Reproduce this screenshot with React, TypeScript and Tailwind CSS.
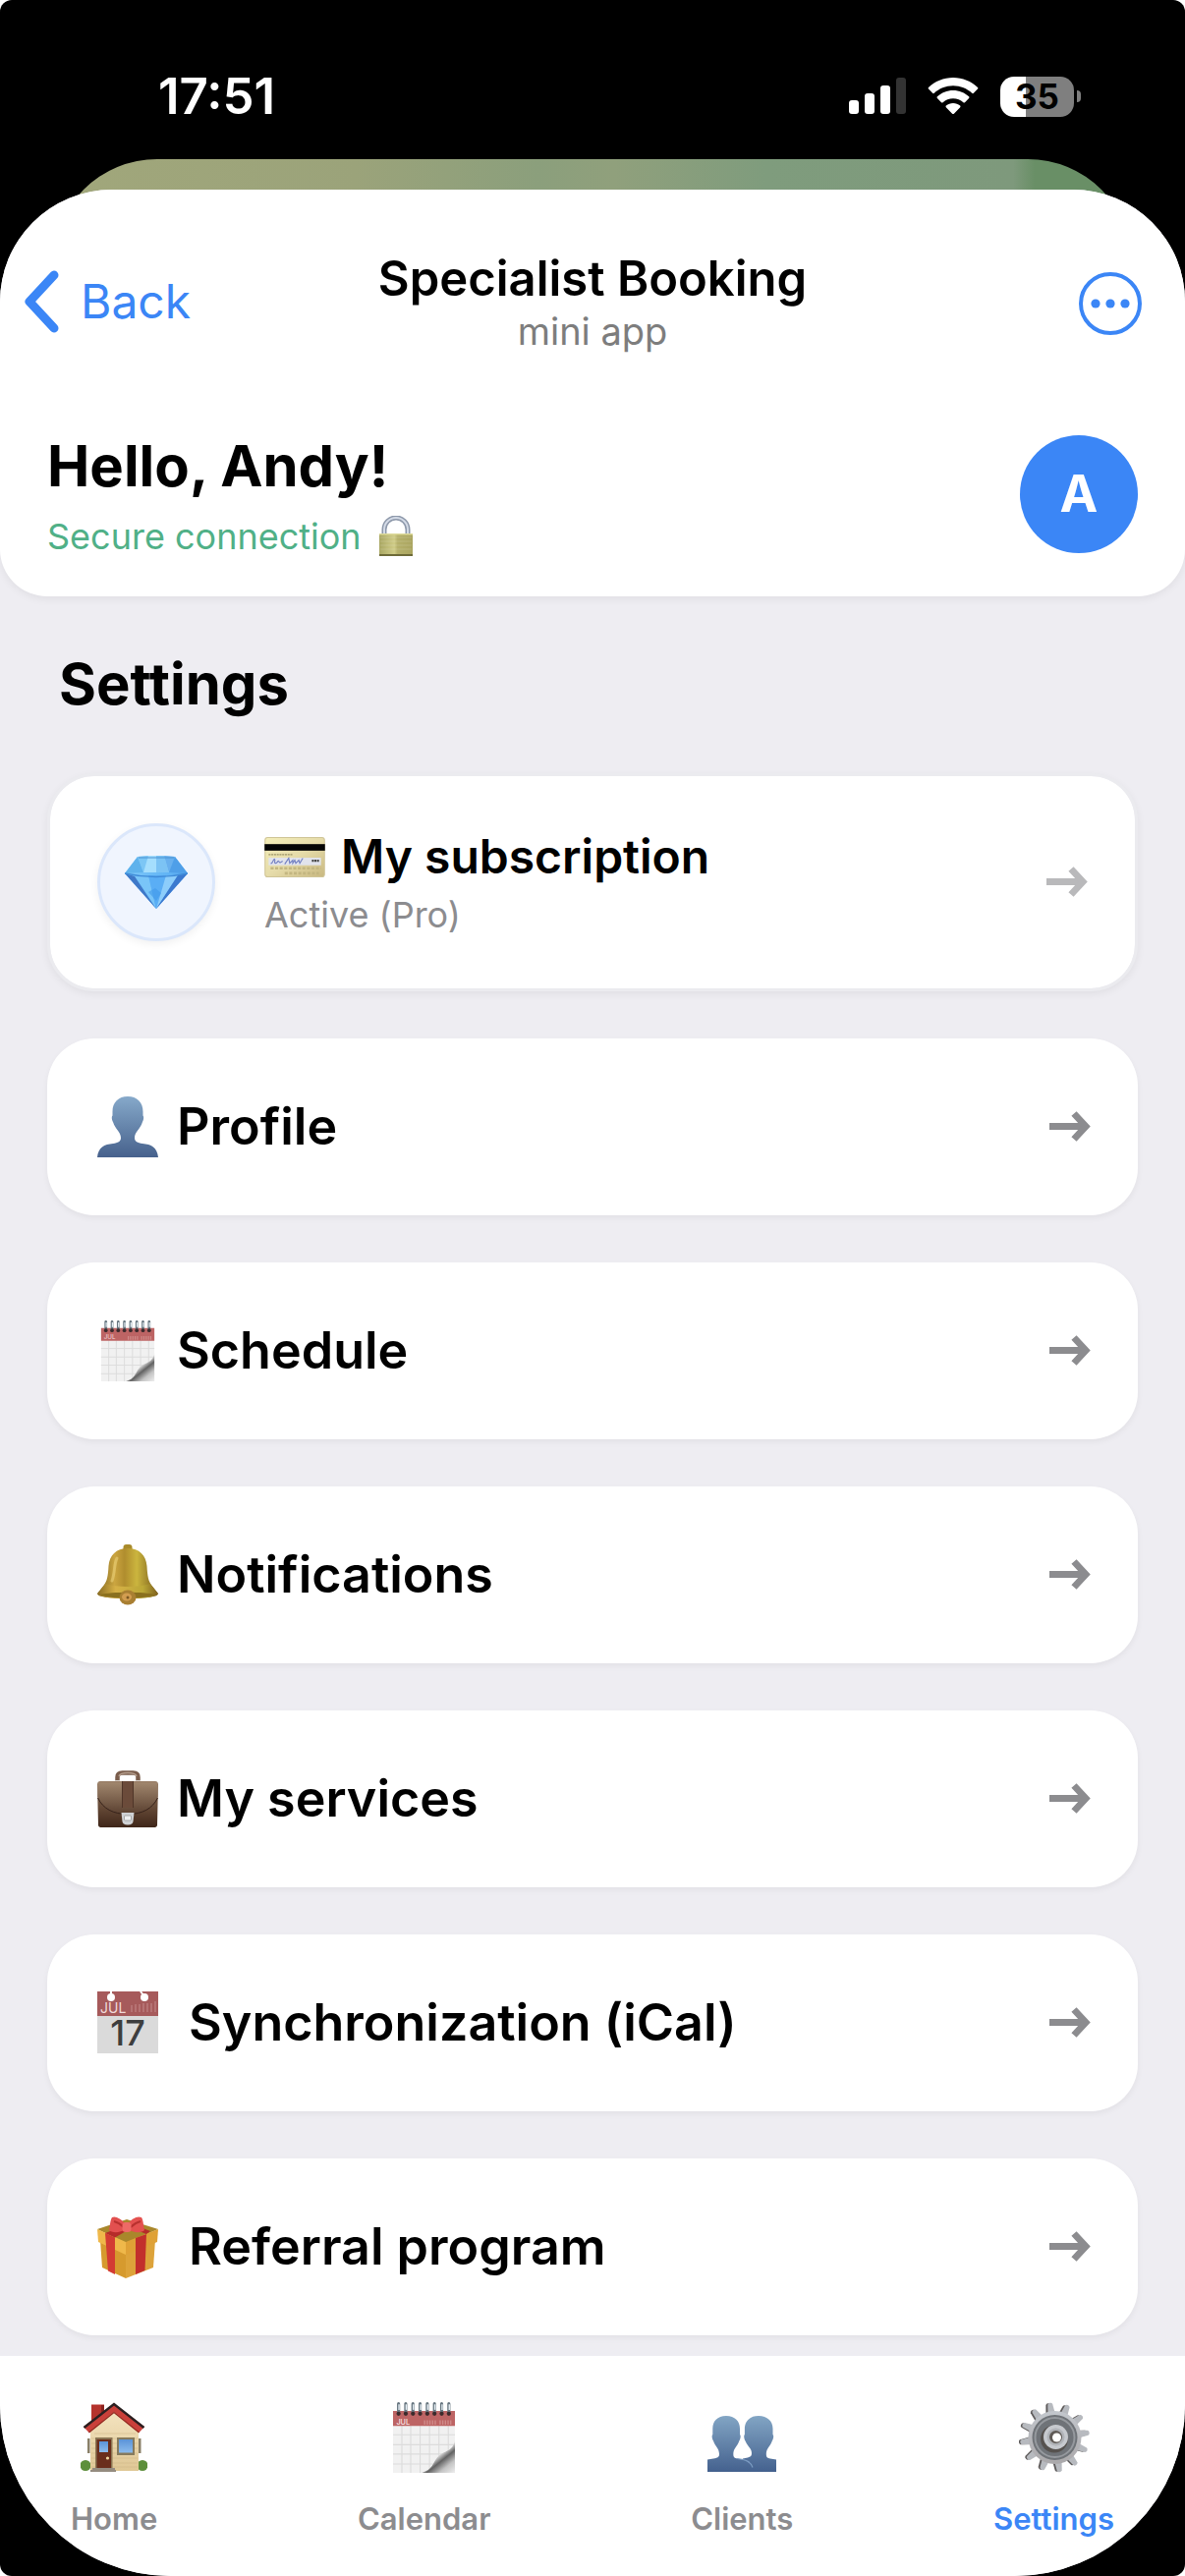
import type { ReactNode } from 'react';

function SignalIcon() {
  return (
    <svg width="58" height="38" viewBox="0 0 58 38" aria-hidden="true">
      <rect x="0" y="23" width="10" height="14" rx="3" fill="#fff" />
      <rect x="16" y="16" width="10" height="21" rx="3" fill="#fff" />
      <rect x="32" y="8" width="10" height="29" rx="3" fill="#fff" />
      <rect x="48" y="0" width="10" height="37" rx="3" fill="#333" />
    </svg>
  );
}

function WifiIcon() {
  return (
    <svg width="52" height="38" viewBox="0 0 52 38" fill="#fff" aria-hidden="true">
      <path d="M26 0c9.700 0 18.500 3.800 25 9.900.5.500.5 1.200 0 1.700l-4.100 4.200c-.5.500-1.200.5-1.700 0C40.200 11.200 33.500 8.300 26 8.300S11.800 11.200 6.800 15.800c-.5.500-1.200.5-1.700 0L1 11.600c-.5-.5-.5-1.200 0-1.700C7.500 3.800 16.300 0 26 0Z" />
      <path d="M26 13c6.200 0 11.800 2.400 16.100 6.300.5.500.5 1.200 0 1.700L38 25.200c-.5.500-1.100.5-1.600.1C33.600 22.800 30 21.300 26 21.300s-7.600 1.500-10.400 4c-.5.400-1.100.4-1.600-.1L9.900 21c-.5-.5-.5-1.200 0-1.700C14.200 15.400 19.800 13 26 13Z" />
      <path d="M26 26c2.700 0 5.200 1 7.100 2.600.5.400.5 1.100.1 1.600l-6.300 6.500c-.5.500-1.300.5-1.800 0l-6.300-6.500c-.4-.5-.4-1.200.1-1.600C20.800 27 23.300 26 26 26Z" />
    </svg>
  );
}

function Battery() {
  return (
    <div className="flex items-center gap-[3px]">
      <div className="flex h-[41px] w-[75px] items-center justify-center rounded-[14px] bg-[linear-gradient(90deg,#fff_35%,#7f7f7f_35%)] text-[35px] leading-none font-bold text-black">
        35
      </div>
      <div className="h-3 w-1 rounded-r-full bg-[#7f7f7f]" />
    </div>
  );
}

function ChevronLeft() {
  return (
    <svg width="36" height="64" viewBox="0 0 36 64" fill="none" stroke="#3b86f6" strokeWidth="9" strokeLinecap="round" strokeLinejoin="round" aria-hidden="true">
      <path d="M31 5 6 32l25 27" />
    </svg>
  );
}

function MoreIcon() {
  return (
    <svg width="64" height="64" viewBox="0 0 64 64" aria-hidden="true">
      <circle cx="32" cy="32" r="30" fill="none" stroke="#3b86f6" strokeWidth="4" />
      <g fill="#3b86f6">
        <circle cx="17" cy="32" r="4.600" />
        <circle cx="32" cy="32" r="4.600" />
        <circle cx="47" cy="32" r="4.600" />
      </g>
    </svg>
  );
}

function ArrowRight({ className }: { className: string }) {
  return (
    <svg className={className} width="42" height="32" viewBox="0 0 42 32" fill="none" stroke="currentColor" strokeWidth="7" aria-hidden="true">
      <path d="M0 15.500h36" />
      <path d="M25 2.500l12 13-12 13" strokeLinejoin="miter" />
    </svg>
  );
}

function LockIcon() {
  return (
    <svg width="34" height="42" viewBox="0 0 34 42" aria-hidden="true">
      <defs>
        <linearGradient id="lockBody" x1="0" y1="0" x2="1" y2="0">
          <stop offset="0" stopColor="#a9a763" />
          <stop offset=".45" stopColor="#cfcb86" />
          <stop offset=".55" stopColor="#b5b06a" />
          <stop offset="1" stopColor="#aaa560" />
        </linearGradient>
      </defs>
      <path d="M5 20V14a12 12 0 0 1 24 0v6" fill="none" stroke="#8d98aa" strokeWidth="5" />
      <path d="M5 20V14a12 12 0 0 1 24 0v6" fill="none" stroke="#d3dae6" strokeWidth="2" />
      <rect x="0" y="18" width="34" height="23" rx="1" fill="url(#lockBody)" />
      <path d="M1 22h32M1 26h32M1 30h32M1 34h32" stroke="#fff" strokeOpacity=".15" />
      <rect x="0" y="18" width="34" height="1.500" fill="#dcd99a" />
      <rect x="0" y="39" width="34" height="2" fill="#6d6a38" />
    </svg>
  );
}

function DiamondIcon() {
  return (
    <svg width="64" height="56" viewBox="0 0 64 56" aria-hidden="true">
      <defs>
        <linearGradient id="gem" x1="0" y1="0" x2="1" y2="1">
          <stop offset="0" stopColor="#8fd3fb" />
          <stop offset=".5" stopColor="#62b5f5" />
          <stop offset="1" stopColor="#3d83dd" />
        </linearGradient>
      </defs>
      <path d="M13 2 32 1l19 1 13 17-32 36L0 19Z" fill="url(#gem)" />
      <path d="M13 2 0 19l19-1Z" fill="#5fb2ec" />
      <path d="M13 2 24 1l-5 17Z" fill="#7cc6f5" />
      <path d="M24 1h16l5 17H19Z" fill="#a5defd" />
      <path d="M32 1h8l5 17H32Z" fill="#7cc3f4" />
      <path d="m51 2-11-1 5 17Z" fill="#69b0ee" />
      <path d="m51 2 13 17-19-1Z" fill="#4f9fe8" />
      <path d="M0 19l10 3 22 33Z" fill="#3f78c8" />
      <path d="M10 21h14l8 34Z" fill="#79c5f8" />
      <path d="M24 21h18L32 55Z" fill="#5aaef5" />
      <path d="M42 21h12L32 55Z" fill="#8ccdfb" />
      <path d="M54 21l10-2-32 36Z" fill="#3b79cf" />
      <path d="M0 19c20 4.500 44 4.500 64 0" fill="none" stroke="#3f8bd8" strokeWidth="1.500" />
      <path d="M24 38l7-4 6 5-5 8Z" fill="#3f97ea" fillOpacity=".6" />
      <path d="M14 3h36" stroke="#4b93d3" strokeWidth="1" />
    </svg>
  );
}

function CreditCardIcon() {
  return (
    <svg width="62" height="41" viewBox="0 0 60 40" aria-hidden="true">
      <defs>
        <linearGradient id="cc" x1="0" y1="0" x2="1" y2="1">
          <stop offset="0" stopColor="#f4eeb9" />
          <stop offset=".5" stopColor="#e6dcaa" />
          <stop offset="1" stopColor="#c9b880" />
        </linearGradient>
      </defs>
      <rect x=".5" y=".5" width="59" height="39" rx="2.500" fill="url(#cc)" stroke="#cfc496" />
      <rect x="0" y="7" width="60" height="6.500" fill="#050505" />
      <path d="M4 17.500h24" stroke="#9c9468" strokeWidth="1.200" strokeDasharray="2 .7" />
      <rect x="4" y="20.500" width="52" height="7.500" fill="#e1e3ec" />
      <path d="M6 26c2 1 3-5 4-4s-1 4 1 4 2-3 3-2 1 2 2 1l2-1M20 27l4-6 1 5 3-3v3l2-3 1 3 3-3 1 3 3-5" fill="none" stroke="#7380c2" strokeWidth="1.100" />
      <path d="M47 23.500h7" stroke="#444" strokeWidth="2.200" strokeDasharray="2 .6" />
      <path d="M6 31h50M20 36h34" stroke="#c3b681" strokeWidth="2.600" strokeDasharray="3 1.500" />
    </svg>
  );
}

function ProfileIcon() {
  return (
    <svg width="62" height="62" viewBox="0 0 62 62" aria-hidden="true">
      <defs>
        <linearGradient id="bust" x1="0" y1="0" x2="0" y2="1">
          <stop offset="0" stopColor="#86a9ca" />
          <stop offset="1" stopColor="#46618c" />
        </linearGradient>
      </defs>
      <path d="M31 0c9.500 0 15.500 6 15.500 15.500v4c1 .7 1 4-.7 7C44 33 38 36 38 42c0 4 3 5.300 8 6 9 .7 15 4 16 14H0c1-10 7-13.300 16-14 5-.7 8-2 8-6 0-6-6-9-7.800-15.500-1.700-3-1.700-6.300-.7-7v-4C15.500 6 21.500 0 31 0Z" fill="url(#bust)" />
    </svg>
  );
}

function CalendarPadIcon({ id, className }: { id: string; className: string }) {
  const rings = [5, 11.5, 18, 24.5, 31, 37.5, 44, 50.5];
  return (
    <svg className={className} viewBox="0 0 56 64" aria-hidden="true">
      <defs>
        <linearGradient id={id} gradientUnits="userSpaceOnUse" x1="38" y1="44" x2="54" y2="64">
          <stop offset="0" stopColor="#fff" />
          <stop offset=".2" stopColor="#e2e2e2" />
          <stop offset=".42" stopColor="#626262" />
          <stop offset=".7" stopColor="#c4c4c4" />
          <stop offset="1" stopColor="#e9e9e9" />
        </linearGradient>
      </defs>
      <rect x="0" y="8" width="56" height="56" fill="#f1f1f1" />
      <path d="M8 21v43M16 21v43M24.500 21v43M33 21v43M41.500 21v43M50 21v43M0 29.500h56M0 38.500h56M0 47h56M0 56h56" stroke="#dcdcdc" />
      <path d="M0 8h56v13.500H0z" fill="#bd6464" />
      <path d="M28 18.500h12M42 18.500h11" stroke="#d08c8a" strokeWidth="4" strokeDasharray="1.200 1.200" />
      <text x="3" y="20" fontSize="6.500" fill="#f4dcdc" fontFamily="Inter, sans-serif">JUL</text>
      {rings.map((x) => (
        <g key={x}>
          <path d={`M${x} 1.500v8`} stroke="#66757f" strokeWidth="2.800" strokeLinecap="round" />
          <path d={`M${x + 0.4} 2v5`} stroke="#e3ecf2" strokeWidth="1.300" />
          <circle cx={x} cy="10.500" r="1.900" fill="#3b2a2c" />
        </g>
      ))}
      <path d="M56 34c-2 12-10 9-16 16-4 5-4 11-14 14h30Z" fill={`url(#${id})`} />
    </svg>
  );
}

function BellIcon() {
  return (
    <svg width="62" height="62" viewBox="0 0 62 62" aria-hidden="true">
      <defs>
        <linearGradient id="brass" x1="0" y1="0" x2="1" y2="0">
          <stop offset="0" stopColor="#7d6420" />
          <stop offset=".28" stopColor="#cba540" />
          <stop offset=".45" stopColor="#b08d2e" />
          <stop offset=".65" stopColor="#cbb53e" />
          <stop offset="1" stopColor="#75591a" />
        </linearGradient>
        <linearGradient id="brassRim" x1="0" y1="0" x2="1" y2="0">
          <stop offset="0" stopColor="#8b6e24" />
          <stop offset=".3" stopColor="#d6b046" />
          <stop offset=".75" stopColor="#bba836" />
          <stop offset="1" stopColor="#80621f" />
        </linearGradient>
      </defs>
      <rect x="26.500" y="0" width="9" height="8" rx="3" fill="#a98b2b" />
      <path d="M31 4c12 0 18.500 7 19.500 18 .6 11 1.500 15 5 20l6 7.500c2 3-10 5.500-30.500 5.500S-1.500 52.500.5 49.500L6.500 42c3.500-5 4.400-9 5-20C12.500 11 19 4 31 4Z" fill="url(#brass)" />
      <path d="M8 40c13 4 33 4 46 0l7.500 9.500c2 3-10 5.500-30.500 5.500S-1.500 52.500.5 49.500Z" fill="url(#brassRim)" />
      <path d="M3 51c12-3 44-3 56 0-5 2.500-15 3.800-28 3.800S8 53.500 3 51Z" fill="#8a701f" />
      <ellipse cx="31" cy="54" rx="8.500" ry="7.500" fill="#a97f32" />
      <ellipse cx="30" cy="53.500" rx="5" ry="4" fill="#d29d50" />
      <circle cx="31" cy="54" r="1.500" fill="#7b5722" />
      <path d="M20 14c-3 6-2 15-5 23" stroke="#f3dc86" strokeOpacity=".5" strokeWidth="3" fill="none" strokeLinecap="round" />
    </svg>
  );
}

function BriefcaseIcon() {
  return (
    <svg width="62" height="58" viewBox="0 0 62 58" aria-hidden="true">
      <defs>
        <linearGradient id="leather" x1="0" y1="0" x2="0" y2="1">
          <stop offset="0" stopColor="#9b8069" />
          <stop offset=".45" stopColor="#6f533f" />
          <stop offset="1" stopColor="#3f2619" />
        </linearGradient>
        <linearGradient id="leatherFlap" x1="0" y1="0" x2="0" y2="1">
          <stop offset="0" stopColor="#a0866d" />
          <stop offset="1" stopColor="#5a4030" />
        </linearGradient>
      </defs>
      <path d="M20.500 11V7c0-3 2-4.500 5-4.500h11c3 0 5 1.500 5 4.500v4" fill="none" stroke="#7a5d4c" strokeWidth="4.500" />
      <path d="M22 6c1-3 4-3.500 9-3.500s8 .5 9 3.500" fill="none" stroke="#b49d8c" strokeWidth="1.500" />
      <path d="M18 11h5M39 11h5" stroke="#d8d0c9" strokeWidth="2" />
      <path d="M3 11h56c2 0 3 1.500 3 3.500l-1 41c0 1.500-1 2.500-2.500 2.500h-55C2 58 1 57 1 55.500l-1-41C0 12.500 1 11 3 11Z" fill="url(#leather)" />
      <path d="M1 12.500h60l.5 14C57 39 46 44.500 31 44.500S5 39 .5 26.500Z" fill="url(#leatherFlap)" />
      <path d="M.5 28C6 39 16 44.500 31 44.500S56 39 61.500 28" fill="none" stroke="#37221a" strokeWidth="1" />
      <rect x="25.500" y="11" width="11" height="27" fill="#6b4b3a" />
      <path d="M25.500 11v27M36.500 11v27" stroke="#4f3528" />
      <path d="M24.500 43h13l-1 9c-.3 2-2 3.500-5.500 3.500S25.800 54 25.500 52Z" fill="#cfd1d4" />
      <rect x="27.500" y="46" width="7" height="5" rx="1" fill="#eef0f2" stroke="#999" strokeWidth=".8" />
    </svg>
  );
}

function CalendarDateIcon() {
  return (
    <svg width="62" height="66" viewBox="0 0 62 66" aria-hidden="true">
      <rect y="1" width="62" height="63" fill="#dadada" />
      <rect y="1" width="62" height="25" fill="#a65a5b" />
      <circle cx="14" cy="7" r="4" fill="#fff" />
      <circle cx="48" cy="7" r="4" fill="#fff" />
      <path d="M14 1v5M44 1l4 5" stroke="#fff" strokeWidth="2" />
      <text x="3" y="22.500" fontSize="14" fill="#f0d9d9" fontFamily="Inter, sans-serif">JUL</text>
      <path d="M35 22V15M39 22v-8M43 22v-8M47 22V13M51 22v-9M55 22v-9M59 22V11" stroke="#c08384" strokeWidth="1.200" />
      <text x="31" y="56" fontSize="36" fontWeight="500" textAnchor="middle" fill="#3e3e3e" fontFamily="Inter, sans-serif">17</text>
    </svg>
  );
}

function GiftIcon() {
  return (
    <svg width="62" height="63" viewBox="0 0 62 63" aria-hidden="true">
      <path d="M3 24 29 33v30L5 52Z" fill="#d69a2e" />
      <path d="M29 33 59 24l-2 28-28 11Z" fill="#dda33a" />
      <path d="M0 13 30 3l32 10-33 14Z" fill="#a9872b" />
      <path d="m0 13 29 13v13L1 26Z" fill="#efb84a" />
      <path d="m62 13-33 13v13l32-13Z" fill="#dfa136" />
      <path d="M8 17l10 4.500V59L11 55.500Z" fill="#d33b33" />
      <path d="m50 18-11 4v37l9.500-4Z" fill="#c22f2c" />
      <path d="M8 17 32 8l6 2-20 11.500Z" fill="#b52b29" />
      <path d="m50 18-20-8 6-2 18 7Z" fill="#b52b29" />
      <path d="M29 8C24 2 18-1 15 1c-2 3-2 9-3 13 3 3 11 3 17-1Z" fill="#e2504f" />
      <path d="M31 8c4-6 10-9 14-7 2 3 2 9 3 13-3 3-11 3-17-1Z" fill="#e4514f" />
      <path d="M17 5c4 1 7 3 10 6M44 5c-4 1-7 3-10 6" stroke="#b8312f" strokeWidth="2" fill="none" />
      <rect x="25.500" y="6" width="9" height="10" rx="3.500" fill="#ee6a66" />
    </svg>
  );
}

function HomeIcon() {
  return (
    <svg width="68" height="72" viewBox="0 0 68 72" aria-hidden="true">
      <defs>
        <linearGradient id="wall" x1="0" y1="0" x2="0" y2="1">
          <stop offset="0" stopColor="#f4e4c0" />
          <stop offset="1" stopColor="#dfc795" />
        </linearGradient>
        <linearGradient id="pane" x1="0" y1="0" x2="0" y2="1">
          <stop offset="0" stopColor="#5a93d8" />
          <stop offset="1" stopColor="#8dbcec" />
        </linearGradient>
      </defs>
      <path d="M11 2.500h13v14L11 25Z" fill="#b5332d" />
      <path d="M21 3h3v13l-3 3Z" fill="#8a231f" />
      <circle cx="5" cy="64.500" r="5.500" fill="#5d8f3b" />
      <circle cx="63" cy="64.500" r="5.500" fill="#5d8f3b" />
      <path d="M10 27 34 8l25 19v43H10Z" fill="url(#wall)" />
      <path d="M14 32h42M11 37h47M11 42h47M11 47h47M11 52h47M11 57h47M11 62h47M11 66h47" stroke="#cdb685" strokeOpacity=".5" />
      <path d="M7 37h2.500v15H7zM59 37h2.500v15H59z" fill="#8a8068" />
      <path d="M34 1.500 3 25l5.500 6L34 10l25.500 21 5.500-6Z" fill="#c9403a" />
      <path d="M3.500 26 34 2l30.500 24" fill="none" stroke="#2b2021" strokeWidth="2.400" />
      <path d="M8.500 31 34 10.500 59.500 31" fill="none" stroke="#93281f" strokeWidth="1.200" />
      <rect x="15" y="36" width="17.500" height="31" fill="#8c7654" />
      <rect x="16.500" y="38" width="14.500" height="29" fill="#6a2e1c" />
      <rect x="19" y="40" width="9" height="11" fill="url(#pane)" />
      <circle cx="27.500" cy="57" r="1.600" fill="#f0d9a0" />
      <rect x="37" y="36" width="18" height="18" fill="#867a5d" />
      <rect x="39" y="38" width="14" height="13.500" fill="url(#pane)" />
      <path d="M12 67h23v2H12zM10 69h26v2H10z" fill="#958c80" />
    </svg>
  );
}

function ClientsIcon() {
  return (
    <svg width="70" height="72" viewBox="0 0 70 72" aria-hidden="true">
      <defs>
        <linearGradient id="clients" x1="0" y1="14" x2="0" y2="71" gradientUnits="userSpaceOnUse">
          <stop offset="0" stopColor="#82a5c4" />
          <stop offset="1" stopColor="#44618e" />
        </linearGradient>
      </defs>
      <g fill="url(#clients)">
        <path d="M52 14c9 0 14.500 5.500 14.500 13v6c1.200 1 .7 4-.7 6.500-1.500 5-6 7.500-6 13.500 0 3 1 4 4 4.500l6.200 1V71H36V57.500l5-1c3-.6 4-2 4-4.500 0-5-4.500-7-6.500-12.500-1.300-2.500-1.800-5.500-.6-6.500v-6C37.900 19.500 43 14 52 14Z" />
        <path d="M19 14c9 0 14 5.500 14 13v6c1.200 1 .7 4-.7 6.500-1.500 5-6 7.500-6 13.500 0 3 1 4 4 4.500 9 1.500 12.700 2 15.700 13.500H0V58.500l6-1c4-.6 6-1.500 6-4.500 0-6-4.500-8.500-6-13.500C4.600 37 4.100 34 5.300 33v-6C5.300 19.500 10 14 19 14Z" />
      </g>
      <path d="M30 57.500c9 1 14 3 16 9" fill="none" stroke="#7c9cc3" strokeWidth="1.200" />
    </svg>
  );
}

function GearIcon() {
  const teeth = Array.from({ length: 12 }, (_, i) => i * 30 - 8);
  return (
    <svg width="72" height="72" viewBox="0 0 72 72" aria-hidden="true">
      <defs>
        <linearGradient id="steel" x1="0" y1="0" x2="0" y2="1">
          <stop offset="0" stopColor="#c3c7cd" />
          <stop offset="1" stopColor="#aaa8aa" />
        </linearGradient>
      </defs>
      <g fill="#5f5c5c">
        {teeth.map((a) => (
          <path key={a} d="M30.500 14 32 2.500q.5-1.500 2.500-1.500t2.500 1.500L38.500 14Z" transform={`rotate(${a} 34.500 36)`} />
        ))}
      </g>
      <g fill="#b7babf">
        {teeth.map((a) => (
          <path key={a} d="M32.500 14 34 2q.5-1.500 2.500-1.500T39 2l1.500 12Z" transform={`rotate(${a} 36.500 36)`} />
        ))}
      </g>
      <circle cx="36.500" cy="36" r="27" fill="url(#steel)" />
      <circle cx="36.500" cy="36" r="23" fill="#6f7378" />
      <circle cx="36.500" cy="36" r="20" fill="none" stroke="#95999e" strokeWidth="2" />
      <circle cx="36" cy="37.500" r="14" fill="#56524f" />
      <circle cx="37.500" cy="35.500" r="12.500" fill="#c6c9ce" />
      <circle cx="37.500" cy="35.500" r="9" fill="#b0b3b8" />
      <circle cx="37.500" cy="35.500" r="6.500" fill="#5f5a56" />
      <circle cx="38.500" cy="36" r="4.500" fill="#fff" />
    </svg>
  );
}

type Row = { label: string; icon: ReactNode; wide?: boolean };

const rows: Row[] = [
  { label: 'Profile', icon: <ProfileIcon /> },
  { label: 'Schedule', icon: <CalendarPadIcon id="curlRow" className="h-[62px] w-[56px]" /> },
  { label: 'Notifications', icon: <BellIcon /> },
  { label: 'My services', icon: <BriefcaseIcon /> },
  { label: 'Synchronization (iCal)', icon: <CalendarDateIcon />, wide: true },
  { label: 'Referral program', icon: <GiftIcon />, wide: true },
];

type Tab = { label: string; icon: ReactNode; active?: boolean };

const tabs: Tab[] = [
  { label: 'Home', icon: <HomeIcon /> },
  { label: 'Calendar', icon: <CalendarPadIcon id="curlTab" className="h-[72px] w-[63px]" /> },
  { label: 'Clients', icon: <ClientsIcon /> },
  { label: 'Settings', icon: <GearIcon />, active: true },
];

function StatusBar() {
  return (
    <div className="flex h-[162px] items-center justify-between pt-[34px] pr-[106px] pl-[161px] text-white">
      <span className="text-[51px] leading-[60px] font-semibold">17:51</span>
      <div className="flex items-center gap-[22px]">
        <SignalIcon />
        <WifiIcon />
        <Battery />
      </div>
    </div>
  );
}

function SettingsRow({ row }: { row: Row }) {
  return (
    <button
      type="button"
      className="flex h-[180px] w-full items-center rounded-[48px] bg-white px-12 text-left shadow-[0_3px_6px_rgba(0,0,0,0.05)]"
    >
      <span className="flex w-[68px] justify-center">{row.icon}</span>
      <span className={row.wide ? 'ml-7 text-[52px] leading-[64px] font-semibold' : 'ml-4 text-[52px] leading-[64px] font-semibold'}>
        {row.label}
      </span>
      <ArrowRight className="ml-auto text-[#8c8c8f]" />
    </button>
  );
}

export default function App() {
  return (
    <div className="min-h-screen bg-white font-[Inter,'Liberation_Sans',sans-serif] text-black">
      <div className="flex min-h-screen flex-col overflow-hidden rounded-xl bg-black">
        <StatusBar />
        <div className="mx-[54px] h-[110px] rounded-t-[106px] bg-[linear-gradient(90deg,#a1a77b_0%,#9ba37a_28%,#8b9f7c_45%,#90a07c_52%,#7f9c7d_66%,#7e997c_89%,#698f66_91%)]" />
        <div className="relative -mt-[79px] flex grow flex-col overflow-hidden rounded-t-[114px] rounded-b-[174px] bg-[#eeedf2]">
          <header className="rounded-b-[48px] bg-white pt-[61px] pb-[39px] shadow-[0_3px_9px_rgba(0,0,0,0.06)]">
            <div className="grid grid-cols-[1fr_auto_1fr] items-center px-6">
              <button type="button" className="flex items-center gap-[22px] justify-self-start text-[48px] leading-[60px] text-[#3b86f6]">
                <ChevronLeft />
                Back
              </button>
              <div className="text-center">
                <h1 className="text-[49px] leading-[60px] font-semibold">Specialist Booking</h1>
                <p className="text-[38px] leading-[46px] text-[#7d7d7d]">mini app</p>
              </div>
              <button type="button" aria-label="More" className="mt-1 mr-5 justify-self-end">
                <MoreIcon />
              </button>
            </div>
            <div className="mt-[78px] flex items-center justify-between px-12">
              <div>
                <h2 className="text-[58px] leading-[72px] font-bold">Hello, Andy!</h2>
                <p className="mt-[14px] flex items-center gap-[18px] text-[36px] leading-[44px] text-[#50b087]">
                  Secure connection
                  <LockIcon />
                </p>
              </div>
              <div className="flex size-[120px] items-center justify-center rounded-full bg-[#3b86f6] text-[52px] font-bold text-white">A</div>
            </div>
          </header>

          <main className="px-12 pt-[53px] pb-[21px]">
            <h2 className="mb-[55px] pl-3 text-[58px] leading-[72px] font-bold">Settings</h2>
            <div className="flex flex-col gap-12">
              <button
                type="button"
                className="flex w-full items-center rounded-[48px] border-[3px] border-[#ebebef] bg-white bg-clip-padding p-12 text-left shadow-[0_3px_9px_rgba(0,0,0,0.06)]"
              >
                <span className="flex size-[120px] items-center justify-center rounded-full border-[3px] border-[#dbe7fb] bg-[#f0f5fe] shadow-[0_3px_9px_rgba(0,0,0,0.06)]">
                  <DiamondIcon />
                </span>
                <span className="ml-[50px]">
                  <span className="flex items-center gap-4 text-[48px] leading-[58px] font-semibold">
                    <CreditCardIcon />
                    My subscription
                  </span>
                  <span className="mt-2 block text-[36px] leading-[44px] text-[#8c8c8f]">Active (Pro)</span>
                </span>
                <ArrowRight className="ml-auto text-[#b9b9bb]" />
              </button>
              {rows.map((row) => (
                <SettingsRow key={row.label} row={row} />
              ))}
            </div>
          </main>

          <nav className="mt-auto flex justify-between bg-white px-[72px] pt-[47px] pb-10">
            {tabs.map((tab) => (
              <button
                key={tab.label}
                type="button"
                className={
                  tab.active
                    ? 'flex flex-col items-center gap-[29px] text-[31px] leading-9 font-semibold text-[#3b86f6]'
                    : 'flex flex-col items-center gap-[29px] text-[31px] leading-9 font-semibold text-[#8c8c8f]'
                }
              >
                {tab.icon}
                {tab.label}
              </button>
            ))}
          </nav>
        </div>
      </div>
    </div>
  );
}
